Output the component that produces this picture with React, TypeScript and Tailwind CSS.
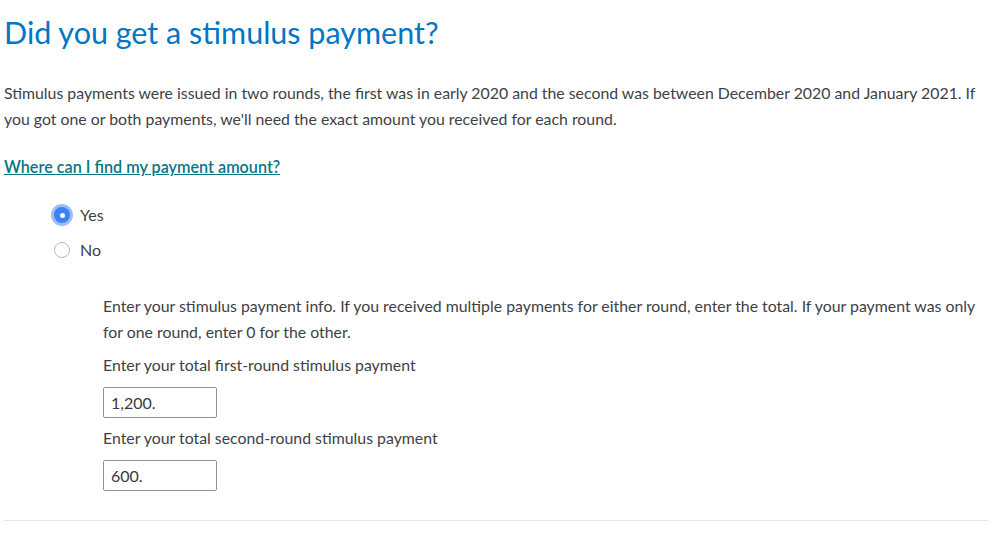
export default function App() {
    return <div className="bg-white min-h-[541px] px-1 pt-[12px]" style={{ fontFamily: "Lato, 'Noto Sans', sans-serif" }}>
        <h1 className="text-[30.5px] leading-[40px] text-[#0077c5] font-normal">Did you get a stimulus payment?</h1>
        <p className="mt-[28px] text-[15.85px] leading-[26px] text-[#404145]">
            Stimulus payments were issued in two rounds, the first was in early 2020 and the second was between December 2020 and January 2021. If you got one or both payments, we'll need the exact amount you received for each round.
        </p>
        <div className="mt-[22px]">
            <a href="#" className="text-[16.2px] leading-[26px] font-semibold text-[#0a7682] underline">Where can I find my payment amount?</a>
        </div>
        <div className="mt-[22px] pl-[50px] flex flex-col gap-[9px]">
            <label className="flex items-center gap-[10px] h-[26px]">
                <span className="w-[16px] h-[16px] rounded-full bg-[#3b82f6] ring-[3px] ring-[#9dbdf7] flex items-center justify-center">
                    <span className="w-[5px] h-[5px] rounded-full bg-white"></span>
                </span>
                <span className="text-[16px] text-[#404145]">Yes</span>
            </label>
            <label className="flex items-center gap-[10px] h-[26px]">
                <span className="w-[16px] h-[16px] rounded-full border border-[#b8b8b8] bg-white"></span>
                <span className="text-[16px] text-[#404145]">No</span>
            </label>
        </div>
        <div className="pl-[99px] mt-[30px] text-[15.85px] leading-[26px] text-[#404145]">
            <p>Enter your stimulus payment info. If you received multiple payments for either round, enter the total. If your payment was only for one round, enter 0 for the other.</p>
            <p className="mt-[7px]">Enter your total first-round stimulus payment</p>
            <div className="mt-[9px] w-[114px] h-[31px] border border-[#8d9096] rounded-[2px] px-[7px] flex items-center text-[16px] text-[#393a3d]">1,200.</div>
            <p className="mt-[7px]">Enter your total second-round stimulus payment</p>
            <div className="mt-[9px] w-[114px] h-[31px] border border-[#8d9096] rounded-[2px] px-[7px] flex items-center text-[16px] text-[#393a3d]">600.</div>
        </div>
        <div className="mt-[29px] border-t border-[#e3e5e8] mr-[6px]"></div>
    </div>
}
